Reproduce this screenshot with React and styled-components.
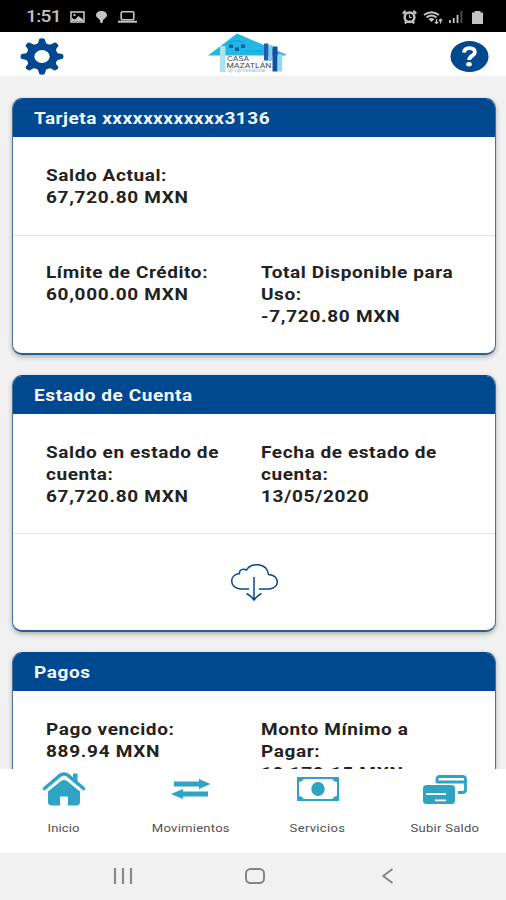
import React from "react";
import styled, { createGlobalStyle } from "styled-components";

const BLUE = "#00488f";
const TEAL = "#2fa3c3";

const GlobalStyle = createGlobalStyle`
  *, *::before, *::after { box-sizing: border-box; }
  html, body { margin: 0; overflow: hidden; }
  body { font-family: Roboto, "Liberation Sans", sans-serif; background: #f1f1f1; }
  svg { display: block; flex: none; }
`;

const Screen = styled.div`
  width: 506px;
  height: 900px;
  display: flex;
  flex-direction: column;
  overflow: hidden;
  background: #f1f1f1;
`;

const StatusBar = styled.header`
  height: 32px;
  flex: none;
  background: #000;
  color: #c4c4c4;
  display: flex;
  justify-content: space-between;
  align-items: center;
  padding: 2px 23px 0 26px;
`;

const StatusGroup = styled.div`
  display: flex;
  align-items: center;
  gap: ${(p) => p.$gap}px;
`;

const Wide = styled.span`
  display: block;
  white-space: nowrap;
  transform: scaleX(1.187);
  transform-origin: ${(p) => p.$origin || "left"} center;
`;

const Clock = styled(Wide)`
  width: 33px;
  font-size: 16px;
  font-weight: 500;
  line-height: 30px;
  letter-spacing: -0.5px;
`;

const TopBar = styled.div`
  height: 44px;
  flex: none;
  background: #fff;
  display: grid;
  grid-template-columns: 188px 1fr 39px;
  align-items: center;
  padding: 0 17px 0 20px;
`;

const TopBarItem = styled.div`
  padding-top: ${(p) => p.$top || 0}px;
  padding-bottom: ${(p) => p.$bottom || 0}px;
`;

const Content = styled.main`
  flex: 1;
  min-height: 0;
  overflow: hidden;
  padding: 22px 10px 0 12px;
  display: flex;
  flex-direction: column;
  gap: 20.5px;
`;

const CardBox = styled.section`
  flex: none;
  height: 256.5px;
  border: 1px solid #2b5f92;
  border-width: 1px 1.5px 2px;
  border-color: ${BLUE} #4a7297 #2b5f92;
  border-radius: 10px;
  background: #fff;
  overflow: hidden;
  box-shadow: 0 2px 5px rgba(0, 0, 0, 0.28);
`;

const CardTitle = styled.h2`
  margin: 0;
  height: 38px;
  padding-left: 21px;
  background: ${BLUE};
  color: #f4f8fc;
  font-size: 16px;
  font-weight: 700;
  line-height: 39px;
  letter-spacing: ${(p) => p.$spacing || 0.5}px;
`;

const CardRow = styled.div`
  height: ${(p) => p.$height}px;
  padding: ${(p) => p.$top}px 0 0 33px;
  border-top: ${(p) => (p.$divided ? "1px solid #e2e2e2" : "0")};
  display: grid;
  grid-template-columns: 214.5px 1fr;
`;

const Field = styled.div`
  color: #222;
  font-size: 16px;
  font-weight: 700;
  line-height: 22px;
  letter-spacing: 0.5px;
`;

const Amount = styled(Wide)`
  letter-spacing: 0.6px;
`;

const DownloadRow = styled.div`
  height: 98px;
  border-top: 1px solid #e2e2e2;
  display: flex;
  justify-content: center;
  padding-top: 29px;
`;

const TabBar = styled.nav`
  height: 84px;
  flex: none;
  background: #fff;
  display: grid;
  grid-template-columns: 126px 127px 127px 127px;
  padding-left: 1px;
`;

const Tab = styled.div`
  display: flex;
  flex-direction: column;
  align-items: center;
`;

const TabIcon = styled.div`
  height: 40px;
  display: flex;
  align-items: center;
`;

const TabLabel = styled(Wide)`
  margin-top: 12px;
  font-size: 11px;
  line-height: 16px;
  letter-spacing: ${(p) => p.$spacing}px;
  color: #505050;
`;

const SystemNav = styled.div`
  height: 47px;
  flex: none;
  padding: 0 112px 1px 113px;
  display: grid;
  grid-template-columns: 132px 1fr 12px;
  align-items: center;
`;

const GearIcon = () => (
  <svg width="44" height="37" viewBox="0 0 44 37">
    <g transform="translate(22 18.5) scale(1.18 1)" fill={BLUE}>
      <circle r="13.2" />
      {[0, 45, 90, 135, 180, 225, 270, 315].map((a) => (
        <path key={a} transform={`rotate(${a})`} d="M-5.3-11.6Q-2.8-13-2.7-16Q-2.6-18.2 0-18.2Q2.6-18.2 2.7-16Q2.8-13 5.3-11.6Z" />
      ))}
      <circle r="6.5" fill="#fff" />
    </g>
  </svg>
);

const LogoText = styled.text`
  font-family: Inter, "Liberation Sans", sans-serif;
`;

const Logo = () => (
  <svg width="80" height="42" viewBox="208 32 80 42">
    <path d="M208 55.5 237 33.5 286 54.5V55.5Z" fill="#20b7e4" />
    <path d="M228 43Q237 38 245 43M246 51H262" stroke="#1685b8" strokeWidth=".8" fill="none" opacity=".6" />
    <g fill="#155aa3"><rect x="229" y="44.5" width="4" height="3.5" /><rect x="235" y="47.5" width="4" height="3.5" /><rect x="241" y="44.5" width="4" height="3.5" /></g>
    <rect x="220" y="46" width="5.5" height="26" fill="#a8e6ee" />
    <rect x="264" y="43.5" width="4.5" height="17" fill="#1c5eab" />
    <rect x="268.5" y="45" width="4" height="16" fill="#7fcce8" />
    <rect x="272.5" y="46.5" width="5" height="25" fill="#164f9f" />
    <rect x="278" y="54" width="4" height="17.5" fill="#8adbe9" />
    <LogoText x="227" y="61.3" fontSize="6" fill="#353b42" textLength="22" lengthAdjust="spacingAndGlyphs">CASA</LogoText>
    <LogoText x="226.5" y="67.6" fontSize="6.6" fill="#353b42" textLength="45" lengthAdjust="spacingAndGlyphs">MAZATLÁN</LogoText>
    <LogoText x="228" y="72" fontSize="4" fill="#48c4dc" textLength="37" lengthAdjust="spacingAndGlyphs">by Lujo Residencial</LogoText>
  </svg>
);

const HelpIcon = () => (
  <svg width="39" height="31" viewBox="0 0 39 31">
    <ellipse cx="19.5" cy="15.5" rx="19" ry="15.4" fill={BLUE} />
    <path d="M14 11.6C14.3 8 16.5 7.2 19.4 7.2C23 7.2 24.9 8.8 24.9 11.3C24.9 14.8 19.3 14.5 19.1 19" fill="none" stroke="#fff" strokeWidth="3.8" />
    <ellipse cx="19" cy="23.3" rx="2.8" ry="2.2" fill="#fff" />
  </svg>
);

const ImageIcon = () => (
  <svg width="15" height="12" viewBox="0 0 15 12">
    <rect x="1" y="1" width="13" height="10" fill="none" stroke="currentColor" strokeWidth="1.6" />
    <path d="M2 10V7L5 8.5 8.5 5 13 8.5V10Z" fill="currentColor" /><rect x="3.5" y="3" width="2" height="2" fill="currentColor" />
  </svg>
);
const BulbIcon = () => (
  <svg width="11" height="12" viewBox="0 0 11 12"><path d="M5.5 0C9 0 11 2 11 4.3C11 6.5 8 7.4 7 9.5L6.5 12H4.5L4 9.5C3 7.4 0 6.5 0 4.3C0 2 2 0 5.5 0Z" fill="currentColor" /></svg>
);
const LaptopIcon = () => (
  <svg width="19" height="12" viewBox="0 0 19 12"><rect x="3.2" y=".8" width="12.6" height="8" rx="1.2" fill="none" stroke="currentColor" strokeWidth="1.6" /><path d="M0 9.7H19V11.7H0Z" fill="currentColor" /></svg>
);
const AlarmIcon = () => (
  <svg width="15" height="14" viewBox="0 0 16 14" preserveAspectRatio="none">
    <path d="M.8 3.6 4 1M15.2 3.6 12 1M3 13.3 5 11.5M13 13.3 11 11.5" stroke="currentColor" strokeWidth="2.4" />
    <ellipse cx="8" cy="7.2" rx="5.2" ry="4.7" fill="none" stroke="currentColor" strokeWidth="2.6" /><path d="M8 4.5V7.5H10.5" fill="none" stroke="currentColor" strokeWidth="1.2" />
  </svg>
);
const WifiIcon = () => (
  <svg width="20" height="13" viewBox="0 0 20 13">
    <path d="M1 4Q8.5-1.5 16 4M3.5 6.5Q8.5 2.5 13.5 6.5" fill="none" stroke="currentColor" strokeWidth="1.8" /><path d="M5.5 8Q8.5 6 11.5 8L8.5 11Z" fill="currentColor" />
    <path d="M13.5 8V12.5M11.8 10.8 13.5 12.6 15.2 10.8M17.5 12.5V8M15.8 10 17.5 8.2 19.2 10" fill="none" stroke="currentColor" strokeWidth="1.2" />
  </svg>
);
const SignalIcon = () => (
  <svg width="14" height="12" viewBox="0 0 14 12" fill="currentColor"><rect y="9" width="1.8" height="3" /><rect x="3.8" y="7" width="1.8" height="5" /><rect x="7.6" y="4" width="1.8" height="8" /><rect x="11.5" y="0" width="1.8" height="12" opacity=".4" /></svg>
);
const BatteryIcon = styled(({ className }) => (
  <svg className={className} width="11" height="13" viewBox="0 0 11 13"><path d="M2.5 0H8.5V1.5H11V13H0V1.5H2.5Z" fill="currentColor" /></svg>
))`
  margin-left: 3px;
`;

const CloudIcon = () => (
  <svg width="48" height="39" viewBox="0 0 48 39" fill="none" stroke={BLUE} strokeWidth="1.5">
    <path d="M19 26H10C-1 24 -1 12 9.5 10.5C9 7 13 5 16.5 7C20-.5 37-1 38.5 11.5C50 13 50 24 40 26H29" />
    <path d="M24 14V36.5M16.5 30.5Q20 32 24 37Q28 32 31.5 30.5" />
  </svg>
);

const HomeIcon = () => (
  <svg width="44" height="34" viewBox="0 0 44 34">
    <path d="M2.5 16.5 18.5 3Q22 .8 25.5 3L41.5 16.5" fill="none" stroke={TEAL} strokeWidth="3.5" strokeLinecap="round" />
    <path d="M31 1.5H35.5V11L31 7.5Z" fill={TEAL} />
    <path d="M6 19.5 19 9Q22 7 25 9L38 19.5V30Q38 33.5 34 33.5H26V24.5H18V33.5H10Q6 33.5 6 30Z" fill={TEAL} />
  </svg>
);
const TransferIcon = () => (
  <svg width="40" height="20" viewBox="0 0 40 20" fill={TEAL}><path d="M3 2.5H28V0L39.5 5 28 10V7.5H3Z" /><path d="M37 12.5H12V10L0 15 12 20V17.5H37Z" /></svg>
);
const MoneyIcon = () => (
  <svg width="42" height="24" viewBox="0 0 42 24"><rect x="1" y="1" width="40" height="22" fill="#fff" stroke={TEAL} strokeWidth="2" /><path d="M1 1H7Q6 5 1 5ZM41 1H35Q36 5 41 5ZM1 23H7Q6 19 1 19ZM41 23H35Q36 19 41 19Z" fill={TEAL} /><ellipse cx="21" cy="12" rx="6.7" ry="7" fill={TEAL} /></svg>
);
const CardsIcon = () => (
  <svg width="44" height="29" viewBox="0 0 44 29">
    <path d="M14 8V4Q14 1.5 17 1.5H39Q42.5 1.5 42.5 4V15Q42.5 17.5 39 17.5H35" fill="none" stroke={TEAL} strokeWidth="2.8" />
    <path d="M14 5.5H42V8.5H14Z" fill={TEAL} />
    <rect x="0" y="10" width="32" height="19" rx="3.5" fill={TEAL} />
    <path d="M3 18H23V20H3ZM12 24.5H23V26.3H12Z" fill="#fff" />
  </svg>
);

const RecentsIcon = () => (
  <svg width="21" height="16" viewBox="0 0 21 16"><path d="M2 0V16M10 0V16M18 0V16" stroke="#898989" strokeWidth="2.2" /></svg>
);
const HomeButtonIcon = () => (
  <svg width="20" height="16" viewBox="0 0 20 16"><rect x="1" y="1" width="18" height="14" rx="4.5" fill="none" stroke="#858585" strokeWidth="2" /></svg>
);
const BackIcon = () => (
  <svg width="12" height="16" viewBox="0 0 12 16"><path d="M10.5 1 1.2 8 10.5 15" fill="none" stroke="#858585" strokeWidth="1.9" /></svg>
);

const Item = ({ label, value }) => (
  <Field>
    {label.map((line) => <Wide key={line}>{line}</Wide>)}
    <Amount>{value}</Amount>
  </Field>
);

const tabs = [
  { label: "Inicio", Icon: HomeIcon, spacing: 0.1 },
  { label: "Movimientos", Icon: TransferIcon, spacing: 0.2 },
  { label: "Servicios", Icon: MoneyIcon, spacing: 0.25 },
  { label: "Subir Saldo", Icon: CardsIcon, spacing: 0.2 },
];

export default function App() {
  return (
    <Screen>
      <GlobalStyle />
      <StatusBar>
        <StatusGroup $gap={11}><Clock>1:51</Clock><ImageIcon /><BulbIcon /><LaptopIcon /></StatusGroup>
        <StatusGroup $gap={6}><AlarmIcon /><WifiIcon /><SignalIcon /><BatteryIcon /></StatusGroup>
      </StatusBar>
      <TopBar>
        <TopBarItem $top={5}><GearIcon /></TopBarItem>
        <TopBarItem $bottom={2}><Logo /></TopBarItem>
        <TopBarItem $top={4}><HelpIcon /></TopBarItem>
      </TopBar>
      <Content>
        <CardBox>
          <CardTitle $spacing={0.44}><Wide>Tarjeta xxxxxxxxxxxx3136</Wide></CardTitle>
          <CardRow $height={98} $top={28}><Item label={["Saldo Actual:"]} value="67,720.80 MXN" /></CardRow>
          <CardRow $height={118} $top={26} $divided>
            <Item label={["Límite de Crédito:"]} value="60,000.00 MXN" />
            <Item label={["Total Disponible para", "Uso:"]} value="-7,720.80 MXN" />
          </CardRow>
        </CardBox>
        <CardBox>
          <CardTitle><Wide>Estado de Cuenta</Wide></CardTitle>
          <CardRow $height={119} $top={28}>
            <Item label={["Saldo en estado de", "cuenta:"]} value="67,720.80 MXN" />
            <Item label={["Fecha de estado de", "cuenta:"]} value="13/05/2020" />
          </CardRow>
          <DownloadRow><CloudIcon /></DownloadRow>
        </CardBox>
        <CardBox>
          <CardTitle><Wide>Pagos</Wide></CardTitle>
          <CardRow $height={119} $top={28}>
            <Item label={["Pago vencido:"]} value="889.94 MXN" />
            <Item label={["Monto Mínimo a", "Pagar:"]} value="10,179.15 MXN" />
          </CardRow>
        </CardBox>
      </Content>
      <TabBar>
        {tabs.map(({ label, Icon, spacing }) => (
          <Tab key={label}>
            <TabIcon><Icon /></TabIcon>
            <TabLabel $origin="center" $spacing={spacing}>{label}</TabLabel>
          </Tab>
        ))}
      </TabBar>
      <SystemNav><RecentsIcon /><HomeButtonIcon /><BackIcon /></SystemNav>
    </Screen>
  );
}
